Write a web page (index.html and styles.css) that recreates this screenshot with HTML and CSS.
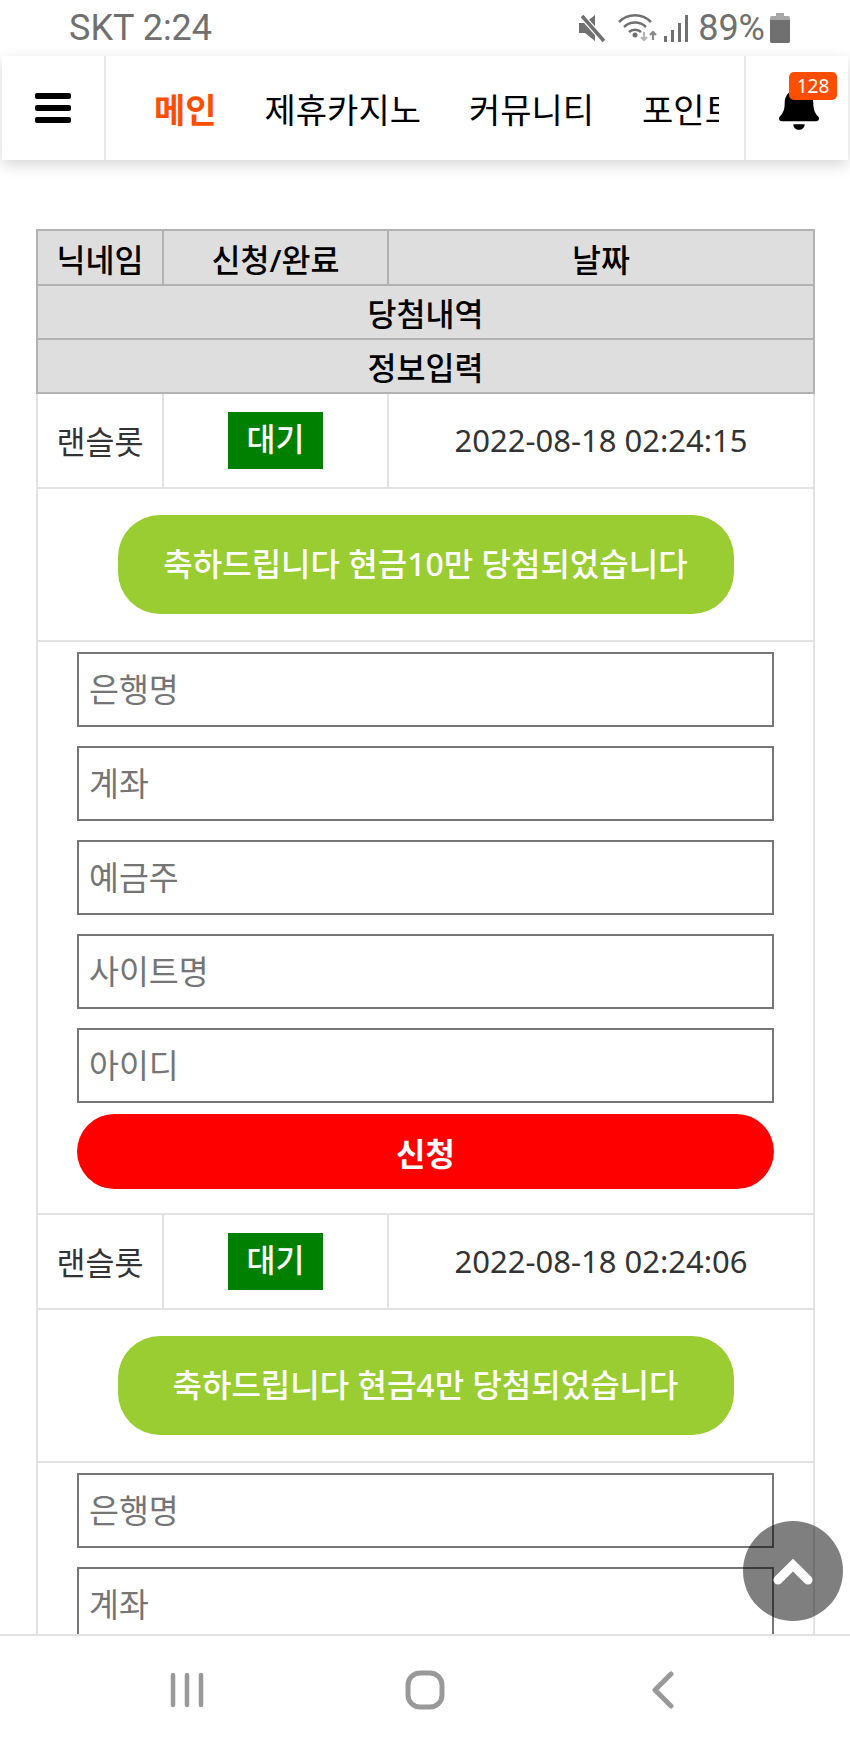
FILE: index.html
```html
<!DOCTYPE html>
<html lang="ko">
<head>
  <meta charset="UTF-8">
  <meta name="viewport" content="width=device-width, initial-scale=1.0">
  <title>당첨내역</title>
  <link rel="stylesheet" href="styles.css">
</head>

<body>

<div class="status-bar">
  <span class="status-left">SKT 2:24</span>
  <div class="status-right">
    <svg class="icon-mute" width="28" height="30" viewBox="0 0 28 30">
      <path d="M1 10h6l10-8v26l-10-8H1z" fill="#707070"/>
      <path d="M3 2l23 26" stroke="#fff" stroke-width="6"/>
      <path d="M4 3l22 25" stroke="#707070" stroke-width="3.5"/>
    </svg>
    <svg class="icon-wifi" width="40" height="30" viewBox="0 0 40 30">
      <g fill="none" stroke="#707070" stroke-width="2.5">
        <path d="M1 9c9-9 23-9 32 0"/>
        <path d="M6 14c6-6 16-6 22 0"/>
        <path d="M11 19c3-3 9-3 12 0"/>
      </g>
      <circle cx="17" cy="22" r="2.5" fill="#707070"/>
      <path d="M26 19v8m-3-3l3 3 3-3" fill="none" stroke="#b5b5b5" stroke-width="2.2"/>
      <path d="M35 27v-8m-3 3l3-3 3 3" fill="none" stroke="#8a8a8a" stroke-width="2.2"/>
    </svg>
    <svg class="icon-signal" width="26" height="30" viewBox="0 0 26 30">
      <rect x="1" y="23" width="3" height="6" fill="#707070"/>
      <rect x="8" y="17" width="3" height="12" fill="#707070"/>
      <rect x="15" y="10" width="3" height="19" fill="#707070"/>
      <rect x="22" y="2" width="3" height="27" fill="#707070"/>
    </svg>
    <span class="status-pct">89%</span>
    <svg class="icon-battery" width="20" height="30" viewBox="0 0 20 30">
      <path d="M6 0h8v3H6z" fill="#a8a8a8"/>
      <path d="M2 3h16a2 2 0 0 1 2 2v23a2 2 0 0 1-2 2H2a2 2 0 0 1-2-2V5a2 2 0 0 1 2-2z" fill="#a8a8a8"/>
      <path d="M0 7h20v21a2 2 0 0 1-2 2H2a2 2 0 0 1-2-2z" fill="#707070"/>
    </svg>
  </div>
</div>

<nav class="top-nav">
  <div class="nav-side nav-burger">
    <span></span><span></span><span></span>
  </div>
  <div class="nav-menu">
    <a class="active" href="#">메인</a>
    <a href="#">제휴카지노</a>
    <a href="#">커뮤니티</a>
    <a href="#">포인트</a>
  </div>
  <div class="nav-side nav-bell">
    <svg width="40" height="46" viewBox="0 0 448 512">
      <path d="M224 512c35.32 0 63.97-28.65 63.97-64H160.03c0 35.35 28.65 64 63.97 64zm215.39-149.71c-19.32-20.76-55.47-51.99-55.47-154.29 0-77.7-54.48-139.9-127.94-155.16V32c0-17.67-14.32-32-31.98-32s-31.98 14.33-31.98 32v20.84C118.56 68.1 64.08 130.3 64.08 208c0 102.3-36.15 133.53-55.47 154.29-6 6.45-8.66 14.16-8.61 21.71.11 16.4 12.98 32 32.1 32h383.8c19.12 0 32-15.6 32.1-32 .05-7.55-2.61-15.27-8.61-21.71z"/>
    </svg>
    <span class="bell-count">128</span>
  </div>
</nav>

<main class="content">
  <table class="win-table">
    <colgroup>
      <col class="col-name">
      <col class="col-state">
      <col class="col-date">
    </colgroup>
    <thead>
      <tr class="row-head">
        <th>닉네임</th>
        <th>신청/완료</th>
        <th>날짜</th>
      </tr>
      <tr><th colspan="3">당첨내역</th></tr>
      <tr><th colspan="3">정보입력</th></tr>
    </thead>
    <tbody>
      <tr class="row-info">
        <td>랜슬롯</td>
        <td><span class="state-tag">대기</span></td>
        <td class="date-cell">2022-08-18 02:24:15</td>
      </tr>
      <tr class="row-prize">
        <td colspan="3"><div class="prize-pill">축하드립니다 현금10만 당첨되었습니다</div></td>
      </tr>
      <tr class="row-form">
        <td colspan="3">
          <form class="claim-form">
            <input type="text" placeholder="은행명">
            <input type="text" placeholder="계좌">
            <input type="text" placeholder="예금주">
            <input type="text" placeholder="사이트명">
            <input type="text" placeholder="아이디">
            <button type="button">신청</button>
          </form>
        </td>
      </tr>
      <tr class="row-info">
        <td>랜슬롯</td>
        <td><span class="state-tag">대기</span></td>
        <td class="date-cell">2022-08-18 02:24:06</td>
      </tr>
      <tr class="row-prize">
        <td colspan="3"><div class="prize-pill">축하드립니다 현금4만 당첨되었습니다</div></td>
      </tr>
      <tr class="row-form">
        <td colspan="3">
          <form class="claim-form">
            <input type="text" placeholder="은행명">
            <input type="text" placeholder="계좌">
            <input type="text" placeholder="예금주">
          </form>
        </td>
      </tr>
    </tbody>
  </table>

  <a class="to-top" href="#">
    <svg width="48" height="36" viewBox="0 0 48 36">
      <path d="M9 27L24 12l15 15" fill="none" stroke="#fff" stroke-width="9" stroke-linecap="round"/>
    </svg>
  </a>
</main>

<div class="system-bar">
  <div class="system-key">
    <svg width="36" height="36" viewBox="0 0 36 36">
      <g fill="none" stroke="#999" stroke-width="4.5" stroke-linecap="round">
        <path d="M4 3v30"/>
        <path d="M18 3v30"/>
        <path d="M32 3v30"/>
      </g>
    </svg>
  </div>
  <div class="system-key">
    <svg width="40" height="40" viewBox="0 0 40 40">
      <rect x="3" y="3" width="34" height="34" rx="12" fill="none" stroke="#999" stroke-width="5"/>
    </svg>
  </div>
  <div class="system-key">
    <svg width="24" height="38" viewBox="0 0 24 38">
      <path d="M20 3L4 19l16 16" fill="none" stroke="#999" stroke-width="5" stroke-linecap="round" stroke-linejoin="round"/>
    </svg>
  </div>
</div>

</body>
</html>
```

FILE: styles.css
```css
* {
  box-sizing: border-box;
}
body {
  font-family: "Noto Sans", "Noto Sans CJK KR", sans-serif;
  background-color: #fff;
  margin: 0;
  padding: 0;
  height: 100vh;
  display: flex;
  flex-direction: column;
  overflow: hidden;
}

/* status bar */
.status-bar {
  height: 56px;
  flex: none;
  display: flex;
  justify-content: space-between;
  align-items: center;
  padding: 0 60px 0 69px;
  color: #707070;
  font-family: Roboto, sans-serif;
  font-size: 36px;
}
.status-right {
  display: flex;
  align-items: center;
}
.icon-mute {
  margin-right: 12px;
}
.icon-wifi {
  margin-right: 5px;
}
.icon-signal {
  margin-right: 9px;
}
.status-pct {
  margin-right: 5px;
}

/* nav */
.top-nav {
  height: 104px;
  flex: none;
  margin: 0 2px;
  display: flex;
  background-color: #fff;
  box-shadow: 0 5px 14px rgba(0, 0, 0, 0.16);
  position: relative;
  z-index: 2;
}
.nav-side {
  width: 104px;
  flex: none;
  position: relative;
}
.nav-burger {
  border-right: 2px solid #e8e8e8;
  display: flex;
  flex-direction: column;
  justify-content: center;
  gap: 6px;
  padding-left: 33px;
}
.nav-burger span {
  width: 36px;
  height: 6px;
  background-color: #000;
  border-radius: 2px;
}
.nav-menu {
  flex: 1;
  min-width: 0;
  display: flex;
  align-items: center;
  gap: 48px;
  margin-right: 25px;
  padding-left: 48px;
  overflow: hidden;
}
.nav-menu a {
  flex: none;
  color: #000;
  font-size: 34px;
  text-decoration: none;
}
.nav-menu a.active {
  color: #ff4e00;
  font-weight: bold;
}
.nav-bell {
  border-left: 2px solid #e8e8e8;
  display: flex;
  justify-content: center;
  padding: 28px 0 0 3px;
}
.bell-count {
  position: absolute;
  top: 16px;
  left: 43px;
  width: 48px;
  height: 28px;
  background-color: #ff4e00;
  border-radius: 5px;
  color: #fff;
  font-size: 19px;
  line-height: 28px;
  text-align: center;
}

/* content */
.content {
  flex: 1;
  min-height: 0;
  padding: 69px 36px 0;
  overflow: hidden;
  position: relative;
}
.win-table {
  width: 779px;
  table-layout: fixed;
  border-collapse: collapse;
  color: #333;
  font-size: 31.5px;
  text-align: center;
}
.col-name {
  width: 126px;
}
.col-state {
  width: 225px;
}
.win-table th {
  height: 54px;
  padding: 0;
  background-color: #dedede;
  border: 2px solid #b2b2b2;
  color: #000;
  font-weight: 500;
}
.win-table .row-head th {
  height: 55px;
}
.win-table td {
  padding: 0;
  border: 2px solid #e2e2e2;
}
.win-table .date-cell {
  font-size: 31px;
}
.row-info td {
  height: 94.5px;
}
.row-prize td {
  height: 153.5px;
}
.state-tag {
  display: block;
  width: 95px;
  height: 57px;
  margin: 0 auto;
  background-color: #008000;
  color: #fff;
  font-weight: 500;
  line-height: 54px;
}
.prize-pill {
  width: 616px;
  height: 99px;
  margin: 0 auto;
  background-color: #9acd32;
  border-radius: 42px;
  color: #fff;
  font-size: 32px;
  font-weight: 500;
  line-height: 97px;
}
.row-form td {
  height: 573px;
  vertical-align: top;
}
.claim-form {
  width: 697px;
  margin: 10px auto 0;
  display: flex;
  flex-direction: column;
}
.claim-form input {
  height: 75px;
  padding: 0 10px;
  background-color: #fff;
  border: 2px solid #767676;
  font-family: inherit;
  font-size: 32.5px;
}
.claim-form input + input {
  margin-top: 19px;
}
.claim-form input::placeholder {
  color: #757575;
}
.claim-form button {
  height: 75px;
  margin-top: 11px;
  background-color: #f00;
  border: 0;
  border-radius: 38px;
  color: #fff;
  font-family: inherit;
  font-size: 32px;
  font-weight: bold;
}
.to-top {
  position: absolute;
  right: 7px;
  bottom: 13px;
  width: 100px;
  height: 100px;
  display: flex;
  justify-content: center;
  align-items: center;
  background-color: rgba(0, 0, 0, 0.5);
  border-radius: 50%;
}

/* android keys */
.system-bar {
  height: 113px;
  flex: none;
  display: flex;
  justify-content: center;
  background-color: #fff;
  border-top: 2px solid #e2e2e2;
}
.system-key {
  width: 238px;
  display: flex;
  justify-content: center;
  align-items: center;
  padding-bottom: 4px;
}
```
